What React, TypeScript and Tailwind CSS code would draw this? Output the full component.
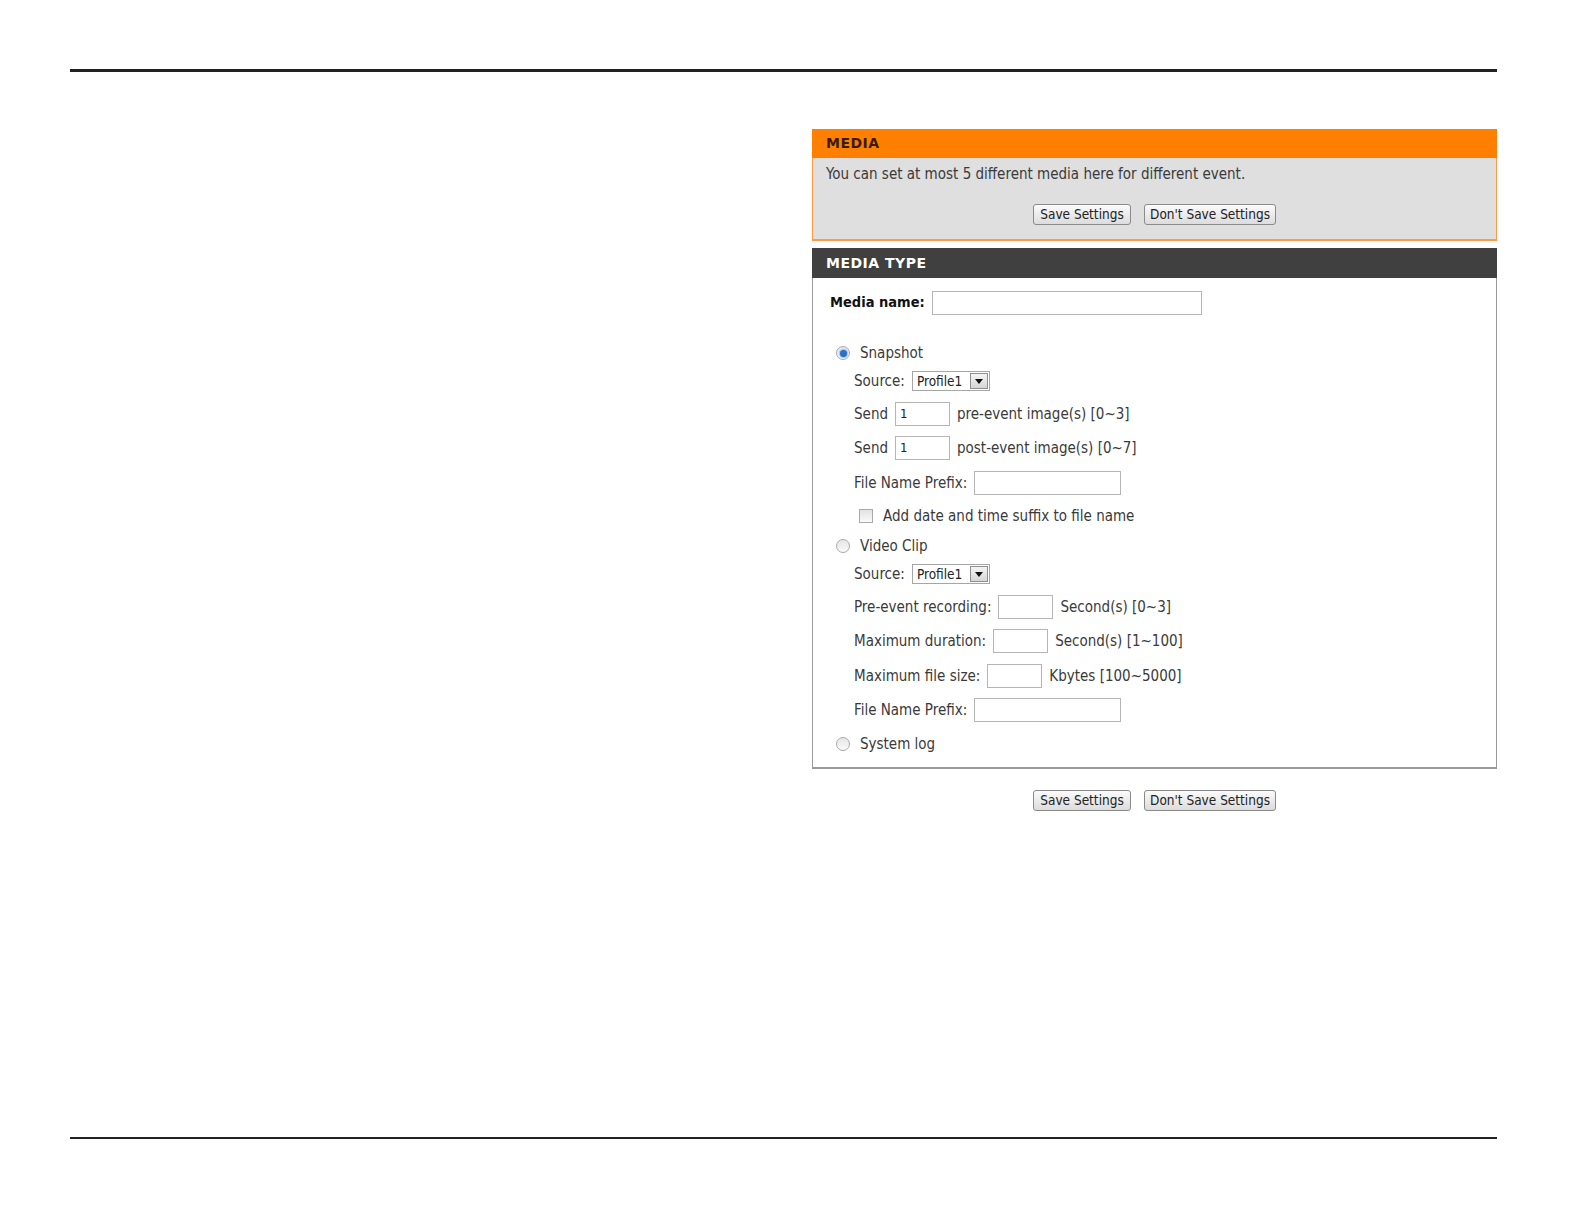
import React from 'react';

const font = "font-['Tahoma','DejaVu_Sans_Condensed','DejaVu_Sans',sans-serif]";

const Btn = ({ label, w }: { label: string; w: string }) => (
  <button
    className={`${w} h-[21px] rounded-[3px] border border-[#8a8a8a] bg-gradient-to-b from-[#fbfbfb] to-[#dcdcdc] text-[13.5px] text-[#222] leading-none`}
  >
    {label}
  </button>
);

const Radio = ({ checked }: { checked?: boolean }) => (
  <span className="flex h-[14px] w-[14px] items-center justify-center rounded-full border border-[#a9a9a9] bg-gradient-to-b from-[#e6e6e6] to-[#fafafa]">
    {checked && <span className="h-[7px] w-[7px] rounded-full bg-[#2a6fc9] shadow-[0_0_1px_1px_#8fc0f0]" />}
  </span>
);

const TextBox = ({ w, value }: { w: string; value?: string }) => (
  <span className={`${w} flex h-[24px] items-center border border-[#b5b5b5] bg-white pl-[4px] text-[13px] text-[#222]`}>
    {value}
  </span>
);

const Select = () => (
  <span className="flex h-[20px] w-[78px] items-center justify-between border border-[#a6a6a6] bg-white pl-[4px] pr-[1px] text-[13.5px] text-[#222]">
    <span>Profile1</span>
    <span className="flex h-[16px] w-[18px] items-center justify-center border border-[#8f8f8f] bg-gradient-to-b from-[#f4f4f4] to-[#d6d6d6]">
      <svg width="8" height="5" viewBox="0 0 8 5">
        <path d="M0 0 L8 0 L4 5 Z" fill="#111" />
      </svg>
    </span>
  </span>
);

export default function App() {
  return (
    <div className={`w-full bg-white pb-[85px] ${font} text-[15px] text-[#3a3a3a]`}>
      <div className="pt-[69px]">
        <div className="ml-[70px] mr-[87px] h-[3px] bg-[#222]" />
      </div>

      <div className="ml-[812px] mt-[57px] w-[685px]">
        {/* MEDIA */}
        <div className="flex h-[29px] items-center bg-[#ff7f00] pl-[14px] text-[14px] font-bold tracking-[0.5px] text-[#3b1a00] font-['DejaVu_Sans',sans-serif]">
          MEDIA
        </div>
        <div className="h-[83px] border-x border-b-2 border-[#fb9c4c] bg-[#dfdfdf] pt-[6px]">
          <div className="pl-[13px] leading-[20px]">You can set at most 5 different media here for different event.</div>
          <div className="mt-[20px] flex justify-center gap-[13px]">
            <Btn label="Save Settings" w="w-[98px]" />
            <Btn label="Don't Save Settings" w="w-[132px]" />
          </div>
        </div>

        {/* MEDIA TYPE */}
        <div className="mt-[7px] flex h-[30px] items-center bg-[#404040] pl-[14px] text-[14px] font-bold tracking-[0.5px] text-white font-['DejaVu_Sans',sans-serif]">
          MEDIA TYPE
        </div>
        <div className="border-x border-b-2 border-[#9a9a9a] pt-[12px] pb-[13px]">
          <div className="ml-[17px] flex h-[25px] items-center gap-[7px]">
            <span className="text-[14.5px] font-bold text-[#111]">Media name:</span>
            <TextBox w="w-[270px]" />
          </div>

          <div className="ml-[23px] mt-[28px] flex h-[20px] items-center gap-[10px]">
            <Radio checked />
            <span>Snapshot</span>
          </div>
          <div className="ml-[41px] mt-[8px] flex h-[20px] items-center gap-[7px]">
            <span>Source:</span>
            <Select />
          </div>
          <div className="ml-[41px] mt-[11px] flex h-[24px] items-center gap-[7px]">
            <span>Send</span>
            <TextBox w="w-[55px]" value="1" />
            <span>pre-event image(s) [0~3]</span>
          </div>
          <div className="ml-[41px] mt-[10px] flex h-[24px] items-center gap-[7px]">
            <span>Send</span>
            <TextBox w="w-[55px]" value="1" />
            <span>post-event image(s) [0~7]</span>
          </div>
          <div className="ml-[41px] mt-[11px] flex h-[24px] items-center gap-[7px]">
            <span>File Name Prefix:</span>
            <TextBox w="w-[147px]" />
          </div>
          <div className="ml-[46px] mt-[11px] flex h-[20px] items-center gap-[10px]">
            <span className="h-[14px] w-[14px] border border-[#a9a9a9] bg-gradient-to-b from-[#e2e2e2] to-[#fafafa]" />
            <span>Add date and time suffix to file name</span>
          </div>

          <div className="ml-[23px] mt-[10px] flex h-[20px] items-center gap-[10px]">
            <Radio />
            <span>Video Clip</span>
          </div>
          <div className="ml-[41px] mt-[8px] flex h-[20px] items-center gap-[7px]">
            <span>Source:</span>
            <Select />
          </div>
          <div className="ml-[41px] mt-[11px] flex h-[24px] items-center gap-[7px]">
            <span>Pre-event recording:</span>
            <TextBox w="w-[55px]" />
            <span>Second(s) [0~3]</span>
          </div>
          <div className="ml-[41px] mt-[10px] flex h-[24px] items-center gap-[7px]">
            <span>Maximum duration:</span>
            <TextBox w="w-[55px]" />
            <span>Second(s) [1~100]</span>
          </div>
          <div className="ml-[41px] mt-[11px] flex h-[24px] items-center gap-[7px]">
            <span>Maximum file size:</span>
            <TextBox w="w-[55px]" />
            <span>Kbytes [100~5000]</span>
          </div>
          <div className="ml-[41px] mt-[10px] flex h-[24px] items-center gap-[7px]">
            <span>File Name Prefix:</span>
            <TextBox w="w-[147px]" />
          </div>
          <div className="ml-[23px] mt-[12px] flex h-[20px] items-center gap-[10px]">
            <Radio />
            <span>System log</span>
          </div>
        </div>

        <div className="mt-[21px] flex justify-center gap-[13px]">
          <Btn label="Save Settings" w="w-[98px]" />
          <Btn label="Don't Save Settings" w="w-[132px]" />
        </div>
      </div>

      <div className="ml-[70px] mr-[87px] mt-[326px] h-[2px] bg-[#222]" />
    </div>
  );
}
